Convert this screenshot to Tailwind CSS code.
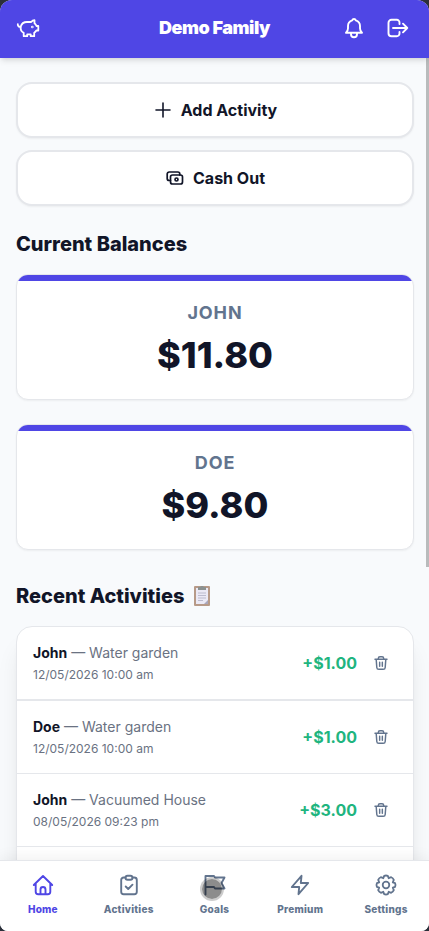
<!DOCTYPE html>
<html lang="en">
<head>
<meta charset="utf-8">
<meta name="viewport" content="width=device-width, initial-scale=1">
<title>Demo Family</title>
<script src="https://cdn.jsdelivr.net/npm/@tailwindcss/browser@4"></script>
</head>
<body class="bg-[#2b2f3a] font-['Inter',sans-serif] text-[#111528] antialiased">
<svg class="hidden" aria-hidden="true">
  <symbol id="trash" viewBox="0 0 24 24" fill="none" stroke="currentColor" stroke-width="2.200" stroke-linecap="round" stroke-linejoin="round">
    <path d="M3 6.500h18M8 6.500V5a2.500 2.500 0 0 1 2.500-2.500h3A2.500 2.500 0 0 1 16 5v1.500M4.800 6.500l.9 12.200A3 3 0 0 0 8.700 21.500h6.600a3 3 0 0 0 3-2.800l.9-12.200M10 11v6M14 11v6"/>
  </symbol>
</svg>
<div class="relative flex h-screen flex-col overflow-hidden rounded-t-xl rounded-b-lg bg-slate-50">
  <header class="z-10 grid shrink-0 grid-cols-[1fr_auto_1fr] items-center bg-[#4f46e5] px-4 pt-4 pb-[18px] text-white shadow-md">
    <svg class="size-6" viewBox="0 0 24 24" fill="none" stroke="currentColor" stroke-width="1.800" stroke-linecap="round" stroke-linejoin="round" role="img" aria-label="Piggy bank">
      <path d="M4.800 10.500C5.600 7.400 8 6 11 6h4.200c.8-1 1.900-1.700 3.300-1.800v3c1 .8 1.600 1.700 2 2.800h1.800v4.500h-1.900c-.6 1-1.300 1.700-2.200 2.200v3.500h-3.500v-1.900h-3.500v1.900H7.700v-3.300C5.500 15.800 4.300 13.400 4.800 10.500ZM4.800 10.800C2.800 11 1.700 9.900 1.800 8.200"/>
      <circle cx="16.300" cy="11" r=".4" fill="currentColor"/>
    </svg>
    <h1 class="text-lg leading-6 font-black tracking-tight">Demo Family</h1>
    <div class="flex items-center justify-end gap-5 pr-[3px]">
      <button type="button" aria-label="Notifications"><svg class="block size-6" viewBox="0 0 24 24" fill="none" stroke="currentColor" stroke-width="1.900" stroke-linecap="round" stroke-linejoin="round"><path d="M4 16.800h16c-1.400-1.200-2-2.500-2-4.500V10a6 6 0 0 0-4.200-5.700 1.900 1.900 0 0 0-3.600 0A6 6 0 0 0 6 10v2.300c0 2-.6 3.300-2 4.500ZM9 16.800v1.500a3 3 0 0 0 6 0v-1.500"/></svg></button>
      <button type="button" aria-label="Log out"><svg class="block size-6" viewBox="0 0 24 24" fill="none" stroke="currentColor" stroke-width="1.900" stroke-linecap="round" stroke-linejoin="round"><path d="M13.500 8V6.500A2.700 2.700 0 0 0 10.800 3.800H5.500A3 3 0 0 0 2.500 6.800v10.400A3 3 0 0 0 5.500 20.200h5.300a2.700 2.700 0 0 0 2.700-2.700V16M7 12h14.300M17 7.700l4.300 4.300L17 16.300"/></svg></button>
    </div>
  </header>

  <main class="min-h-0 flex-1 overflow-hidden pt-6 pr-[15px] pb-6 pl-4">
    <div class="flex flex-col gap-3">
      <button type="button" class="flex h-14 items-center justify-center gap-2 rounded-2xl border-2 border-gray-200 bg-white font-bold shadow-xs"><svg class="size-5" viewBox="0 0 20 20" fill="none" stroke="currentColor" stroke-width="1.600" stroke-linecap="round"><path d="M10 3v14M3 10h14"/></svg>Add Activity</button>
      <button type="button" class="flex h-14 items-center justify-center gap-2 rounded-2xl border-2 border-gray-200 bg-white font-bold shadow-xs"><svg class="size-5" viewBox="0 0 20 20" fill="none" stroke="currentColor" stroke-width="1.700" stroke-linecap="round" stroke-linejoin="round"><rect x="5.500" y="7" width="12" height="9" rx="2"/><path d="M5.500 12.500H4.200a2 2 0 0 1-2-2V6a2 2 0 0 1 2-2h8.600a2 2 0 0 1 2 2v1"/><circle cx="11.500" cy="11.500" r="1.500"/></svg>Cash Out</button>
    </div>

    <h2 class="mt-6 text-xl leading-7 font-extrabold">Current Balances</h2>
    <div class="mt-4 flex flex-col gap-6">
      <section class="overflow-hidden rounded-xl border border-gray-200 bg-white pb-[22px] text-center shadow-xs">
        <div class="h-1.5 bg-[#4f46e5]"></div>
        <h3 class="mt-5 text-lg leading-6 font-bold tracking-wider text-slate-500">JOHN</h3>
        <p class="mt-2 text-4xl leading-11 font-extrabold">$11.80</p>
      </section>
      <section class="overflow-hidden rounded-xl border border-gray-200 bg-white pb-[22px] text-center shadow-xs">
        <div class="h-1.5 bg-[#4f46e5]"></div>
        <h3 class="mt-5 text-lg leading-6 font-bold tracking-wider text-slate-500">DOE</h3>
        <p class="mt-2 text-4xl leading-11 font-extrabold">$9.80</p>
      </section>
    </div>

    <h2 class="mt-8 flex items-center gap-2 text-xl leading-7 font-extrabold">Recent Activities
      <svg class="size-5" viewBox="0 0 20 20" aria-hidden="true"><rect x="2" y="0" width="16" height="20" rx="1" fill="#b79a88"/><path d="M4 2h12v16H4z" fill="#ebe9f5"/><path d="M12 18h4v-4z" fill="#a9a7bd"/><path d="M6 7h8M6 9.500h8M6 12h8M6 14.500h5" stroke="#b7b5c9" stroke-width=".9"/><path d="M6 1h2.500a1.500 1.500 0 0 1 3 0H14v3H6z" fill="#8b9190"/></svg>
    </h2>
    <ul class="mt-4 rounded-2xl border border-gray-200 bg-white shadow-xl">
      <li class="flex items-center border-b-2 border-gray-200 p-4">
        <div class="flex-1"><p class="text-sm leading-5 text-gray-500"><strong class="font-bold text-[#111528]">John</strong> — Water garden</p><p class="mt-1 text-xs leading-4 text-gray-500">12/05/2026 10:00 am</p></div>
        <span class="font-bold text-[#1fb57f]">+$1.00</span>
        <button type="button" aria-label="Delete John, Water garden" class="ml-2 p-2 text-slate-500"><svg class="block size-4"><use href="#trash"/></svg></button>
      </li>
      <li class="flex items-center border-b border-gray-200 p-4">
        <div class="flex-1"><p class="text-sm leading-5 text-gray-500"><strong class="font-bold text-[#111528]">Doe</strong> — Water garden</p><p class="mt-1 text-xs leading-4 text-gray-500">12/05/2026 10:00 am</p></div>
        <span class="font-bold text-[#1fb57f]">+$1.00</span>
        <button type="button" aria-label="Delete Doe, Water garden" class="ml-2 p-2 text-slate-500"><svg class="block size-4"><use href="#trash"/></svg></button>
      </li>
      <li class="flex items-center border-b border-gray-200 p-4">
        <div class="flex-1"><p class="text-sm leading-5 text-gray-500"><strong class="font-bold text-[#111528]">John</strong> — Vacuumed House</p><p class="mt-1 text-xs leading-4 text-gray-500">08/05/2026 09:23 pm</p></div>
        <span class="font-bold text-[#1fb57f]">+$3.00</span>
        <button type="button" aria-label="Delete John, Vacuumed House" class="ml-2 p-2 text-slate-500"><svg class="block size-4"><use href="#trash"/></svg></button>
      </li>
      <li class="h-18"></li>
    </ul>
  </main>
  <div class="absolute top-[58px] right-0 h-[509px] w-[3px] bg-[#b9bbbc]"></div>

  <nav class="z-10 grid shrink-0 grid-cols-5 border-t border-gray-200 bg-white pt-3 pb-[14px] text-center text-[10px] leading-4 font-extrabold tracking-wide text-slate-500 shadow-[0_-4px_12px_rgba(0,0,0,0.05)]">
    <a href="#home" class="flex flex-col items-center gap-1 text-[#4f46e5]"><svg class="size-6" viewBox="0 0 24 24" fill="none" stroke="currentColor" stroke-width="1.900" stroke-linecap="round" stroke-linejoin="round"><path d="M2.800 12 12 3l9.200 9M4.700 10.500v8.200a2.500 2.500 0 0 0 2.500 2.500h9.600a2.500 2.500 0 0 0 2.500-2.500v-8.200M9.500 21v-4.500a2.500 2.500 0 0 1 5 0V21"/></svg>Home</a>
    <a href="#activities" class="flex flex-col items-center gap-1"><svg class="size-6" viewBox="0 0 24 24" fill="none" stroke="currentColor" stroke-width="1.900" stroke-linecap="round" stroke-linejoin="round"><path d="M8.500 4.500H6.700a2.500 2.500 0 0 0-2.500 2.500v11.700a2.500 2.500 0 0 0 2.500 2.500h10.600a2.500 2.500 0 0 0 2.500-2.500V7a2.500 2.500 0 0 0-2.500-2.500h-1.800M8.700 13.500l2.500 2.500 4.300-4.300"/><rect x="8.500" y="2.800" width="7" height="4" rx="2"/></svg>Activities</a>
    <a href="#goals" class="relative flex flex-col items-center gap-1"><svg class="size-6" viewBox="0 0 24 24" fill="none" stroke="currentColor" stroke-width="1.900" stroke-linecap="round" stroke-linejoin="round"><path d="M3.500 21.500V3H12l1 1.500h9.500l-3 5.500 3 5.500H13l-1-1.500H3.500"/></svg>Goals<span class="absolute top-1 left-1/2 size-6 -translate-x-3.5 rounded-full border-2 border-black/20 bg-black/45 bg-clip-padding"></span></a>
    <a href="#premium" class="flex flex-col items-center gap-1"><svg class="size-6" viewBox="0 0 24 24" fill="none" stroke="currentColor" stroke-width="1.900" stroke-linecap="round" stroke-linejoin="round"><path d="M13.500 2.800 3.800 14h7.400l-.7 7.200L20.200 10h-7.400Z"/></svg>Premium</a>
    <a href="#settings" class="flex flex-col items-center gap-1"><svg class="size-6" viewBox="0 0 24 24" fill="none" stroke="currentColor" stroke-width="1.800" stroke-linecap="round" stroke-linejoin="round"><path d="M9.300 5.200 10.200 2.900Q12 2.100 13.800 2.900L14.700 5.200 17.200 4.200Q19 5 19.800 6.800L18.800 9.300 21.100 10.200Q21.900 12 21.100 13.800L18.800 14.700 19.800 17.200Q19 19 17.200 19.800L14.700 18.800 13.800 21.100Q12 21.900 10.200 21.100L9.300 18.800 6.800 19.800Q5 19 4.200 17.200L5.200 14.700 2.900 13.800Q2.100 12 2.900 10.200L5.200 9.300 4.200 6.800Q5 5 6.800 4.200Z"/><circle cx="12" cy="12" r="3.300"/></svg>Settings</a>
  </nav>
</div>
</body>
</html>
